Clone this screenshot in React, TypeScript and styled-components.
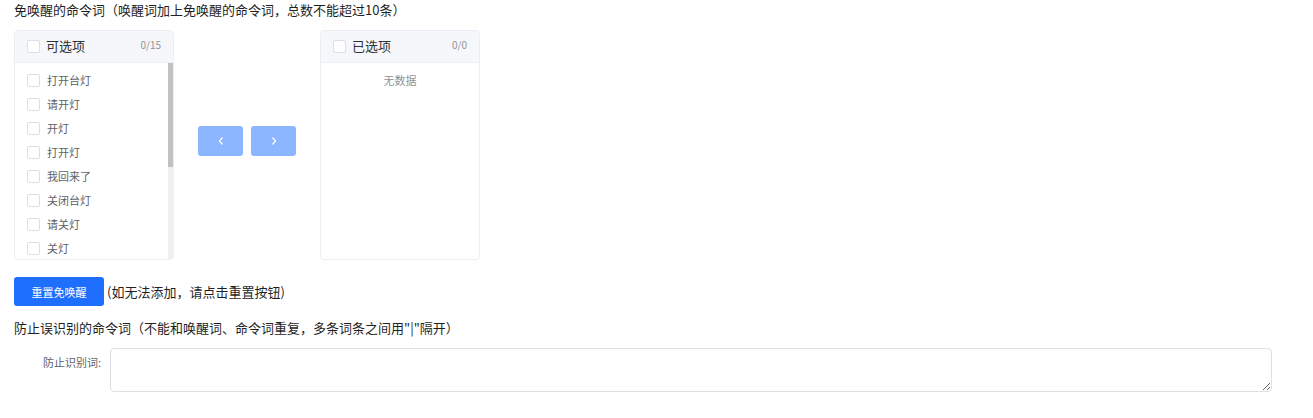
import React from 'react';
import styled, { createGlobalStyle } from 'styled-components';

const GlobalStyle = createGlobalStyle`
  html, body {
    margin: 0;
    padding: 0;
    background: #fff;
    font-family: "Noto Sans CJK SC", "Noto Sans", "Liberation Sans", sans-serif;
    color: #303133;
  }
`;

const Page = styled.div`
  padding: 0 14px;
  width: 1313px;
  box-sizing: border-box;
`;

const SectionTitle = styled.div<{ $top?: number }>`
  font-size: 13px;
  line-height: 20px;
  color: #1f1f1f;
  margin-top: ${p => p.$top ?? 0}px;
`;

const TransferWrap = styled.div`
  display: flex;
  align-items: center;
  margin-top: 10px;
`;

const Panel = styled.div`
  width: 160px;
  height: 230px;
  border: 1px solid #ebeef5;
  border-radius: 4px;
  box-sizing: border-box;
  display: flex;
  flex-direction: column;
  overflow: hidden;
`;

const PanelHeader = styled.div`
  height: 32px;
  flex: none;
  background: #f5f7fa;
  border-bottom: 1px solid #ebeef5;
  box-sizing: border-box;
  display: flex;
  align-items: center;
  padding: 0 12px 0 12px;
`;

const HeaderTitle = styled.span`
  font-size: 13px;
  line-height: 18px;
  color: #303133;
  margin: -2px 0 0 6px;
  flex: 1;
`;

const Count = styled.span`
  font-size: 10px;
  line-height: 14px;
  color: #909399;
  margin-top: -4px;
`;

const Box = styled.span`
  width: 11px;
  height: 11px;
  border: 1px solid #dcdfe6;
  border-radius: 2px;
  background: #fff;
  flex: none;
`;

const Body = styled.div`
  flex: 1;
  min-height: 0;
  display: flex;
`;

const List = styled.div`
  flex: 1;
  overflow: hidden;
  padding: 5px 0;
`;

const Track = styled.div`
  width: 5px;
  flex: none;
  background: #f0f0f0;
`;

const Thumb = styled.div`
  height: 104px;
  background: #c1c1c1;
`;

const Item = styled.div`
  height: 24px;
  display: flex;
  align-items: center;
  padding-left: 12px;
  font-size: 11px;
  color: #606266;
`;

const ItemText = styled.span`
  margin-left: 7px;
  margin-top: -1px;
`;

const Empty = styled.div`
  text-align: center;
  font-size: 11px;
  line-height: 16px;
  color: #909399;
  padding-top: 9px;
`;

const Buttons = styled.div`
  display: flex;
  gap: 8px;
  margin: -8px 24px 0;
`;

const ArrowButton = styled.button`
  width: 45px;
  height: 30px;
  border: none;
  border-radius: 3px;
  background: #8cb6ff;
  display: flex;
  align-items: center;
  justify-content: center;
  padding: 0;
  cursor: not-allowed;
`;

const ResetRow = styled.div`
  display: flex;
  align-items: center;
  margin-top: 17px;
`;

const PrimaryButton = styled.button`
  width: 90px;
  height: 29px;
  border: none;
  border-radius: 3px;
  background: #1f6fff;
  color: #fff;
  font-family: inherit;
  font-size: 11px;
  line-height: 16px;
  padding: 0;
  cursor: pointer;
`;

const Hint = styled.span`
  font-size: 13px;
  line-height: 20px;
  color: #1f1f1f;
  margin-left: 3px;
`;

const FormRow = styled.div`
  display: flex;
  align-items: flex-start;
  margin-top: 10px;
`;

const Label = styled.label`
  width: 96px;
  padding-right: 9px;
  box-sizing: border-box;
  text-align: right;
  font-size: 11px;
  line-height: 28px;
  color: #606266;
  flex: none;
`;

const TextArea = styled.textarea`
  width: 1162px;
  height: 44px;
  box-sizing: border-box;
  border: 1px solid #dcdfe6;
  border-radius: 4px;
  resize: vertical;
  font-family: inherit;
  font-size: 12px;
  padding: 5px 10px;
  outline: none;
`;

const Chevron = ({ dir }: { dir: 'left' | 'right' }) => (
  <svg width="8" height="10" viewBox="0 0 8 10">
    <polyline
      points={dir === 'left' ? '5.5,1.5 2.5,5 5.5,8.5' : '2.5,1.5 5.5,5 2.5,8.5'}
      fill="none"
      stroke="#fff"
      strokeWidth="1.2"
    />
  </svg>
);

// only the rows that show in the scrolled window
const options = ['打开台灯', '请开灯', '开灯', '打开灯', '我回来了', '关闭台灯', '请关灯', '关灯'];

const App: React.FC = () => (
  <Page>
    <GlobalStyle />
    <SectionTitle>免唤醒的命令词（唤醒词加上免唤醒的命令词，总数不能超过10条）</SectionTitle>
    <TransferWrap>
      <Panel>
        <PanelHeader>
          <Box />
          <HeaderTitle>可选项</HeaderTitle>
          <Count>0/15</Count>
        </PanelHeader>
        <Body>
          <List>
            {options.map(o => (
              <Item key={o}>
                <Box />
                <ItemText>{o}</ItemText>
              </Item>
            ))}
          </List>
          <Track>
            <Thumb />
          </Track>
        </Body>
      </Panel>
      <Buttons>
        <ArrowButton><Chevron dir="left" /></ArrowButton>
        <ArrowButton><Chevron dir="right" /></ArrowButton>
      </Buttons>
      <Panel>
        <PanelHeader>
          <Box />
          <HeaderTitle>已选项</HeaderTitle>
          <Count>0/0</Count>
        </PanelHeader>
        <Empty>无数据</Empty>
      </Panel>
    </TransferWrap>
    <ResetRow>
      <PrimaryButton>重置免唤醒</PrimaryButton>
      <Hint>(如无法添加，请点击重置按钮)</Hint>
    </ResetRow>
    <SectionTitle $top={12}>防止误识别的命令词（不能和唤醒词、命令词重复，多条词条之间用"|"隔开）</SectionTitle>
    <FormRow>
      <Label>防止识别词:</Label>
      <TextArea />
    </FormRow>
  </Page>
);

export default App;
